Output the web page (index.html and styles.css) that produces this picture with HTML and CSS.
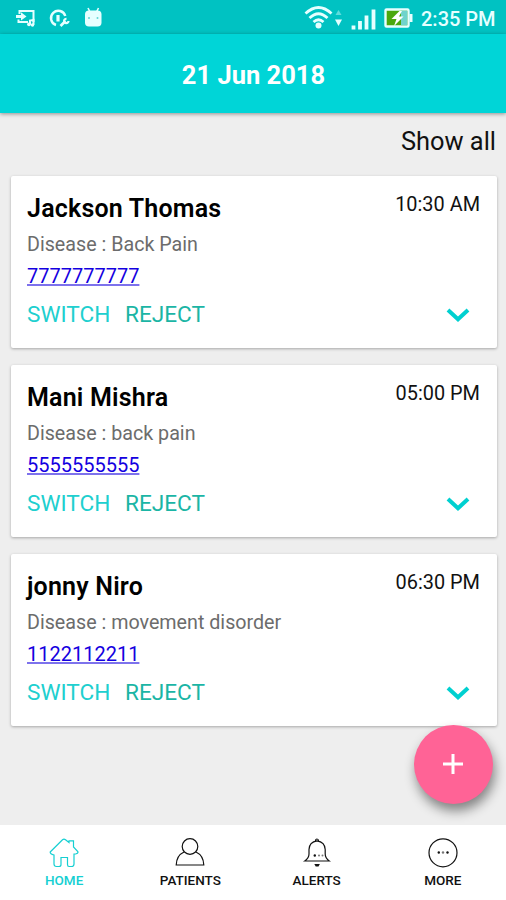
FILE: index.html
```html
<!DOCTYPE html>
<html lang="en">
<head>
<meta charset="utf-8">
<title>Appointments</title>
<link rel="stylesheet" href="styles.css">
</head>
<body>
<div class="app">
  <div class="status">
    <svg class="status-left" width="110" height="34" viewBox="0 0 110 34" fill="none" stroke="#e6ffff" stroke-width="2">
      <path d="M19.500 14V11H33.500V22M18.500 19.500V22H28"/>
      <path d="M21 12.300L26.500 16.500L21 20.500Z" fill="#e6ffff" stroke="none"/>
      <path d="M16 16.500H23" stroke-width="3"/>
      <circle cx="29" cy="24.300" r="1.900" fill="#e6ffff" stroke="none"/>
      <circle cx="32.500" cy="25" r="1.700" fill="#e6ffff" stroke="none"/>
      <path d="M30 24.500V20.500L33.500 20V25"/>
      <path d="M56 25A7.300 7.300 0 1 1 65.300 16" stroke-width="2.400"/>
      <path d="M58 15V21.500" stroke-width="3.200"/>
      <path d="M60.500 26L65.500 21" stroke-width="2.600"/>
      <path d="M66.500 18.800A2.200 2.200 0 1 0 68.500 21" stroke-width="2.200"/>
      <path d="M88 8L90 12M98.500 8L96.500 12" stroke-width="1.600"/>
      <rect x="85" y="10.500" width="16.500" height="16" rx="4" fill="#e6ffff" stroke="none"/>
      <circle cx="89" cy="18" r="1" fill="#5fd5d5" stroke="none"/>
      <circle cx="97.500" cy="18" r="1" fill="#5fd5d5" stroke="none"/>
    </svg>
    <svg class="status-right" width="112" height="34" viewBox="0 0 112 34" fill="none" stroke="#e6ffff">
      <path d="M1.500 13.500Q14.500 1.500 27.500 13.500M5.500 18Q14.500 9.500 23.500 18M9.500 22Q14.500 17.500 19.500 22" stroke-width="2.800"/>
      <circle cx="14.500" cy="25.500" r="3" fill="#e6ffff" stroke="none"/>
      <path d="M31.500 15L34.500 10L37.500 15Z" fill="#5fdcdc" stroke="none"/>
      <path d="M31 19.500H38L34.500 26Z" fill="#e6ffff" stroke="none"/>
      <path d="M49.500 25.500V29.500M56 21V29.500M62.500 15.500V29.500M69.500 9.500V29.500" stroke-width="3.800"/>
      <rect x="81.500" y="9.500" width="23" height="17" rx="1" fill="#4aa80e" stroke-width="2.400"/>
      <path d="M97 10.700H103.300V25.300H97Z" fill="#6fd3cc" stroke="none"/>
      <path d="M105.500 14H108.500V22H105.500Z" fill="#e6ffff" stroke="none"/>
      <path d="M95.500 11L87.500 19H92.500L90 26L99.500 16.500H95L98 11Z" fill="#fff" stroke="none"/>
    </svg>
    <span class="clock">2:35 PM</span>
  </div>
  <header class="bar">21 Jun 2018</header>
  <main class="content">
    <div class="show-all">Show all</div>
    <section class="card">
      <div class="top"><h2 class="name">Jackson Thomas</h2><time class="time">10:30 AM</time></div>
      <p class="disease">Disease : Back Pain</p>
      <a class="phone">7777777777</a>
      <div class="actions"><span class="switch">SWITCH</span><span class="reject">REJECT</span>
        <svg class="chevron" width="24" height="16" viewBox="0 0 24 16"><path d="M2 3L12 12.300L22 3"/></svg></div>
    </section>
    <section class="card">
      <div class="top"><h2 class="name">Mani Mishra</h2><time class="time">05:00 PM</time></div>
      <p class="disease">Disease : back pain</p>
      <a class="phone">5555555555</a>
      <div class="actions"><span class="switch">SWITCH</span><span class="reject">REJECT</span>
        <svg class="chevron" width="24" height="16" viewBox="0 0 24 16"><path d="M2 3L12 12.300L22 3"/></svg></div>
    </section>
    <section class="card">
      <div class="top"><h2 class="name">jonny Niro</h2><time class="time">06:30 PM</time></div>
      <p class="disease">Disease : movement disorder</p>
      <a class="phone">1122112211</a>
      <div class="actions"><span class="switch">SWITCH</span><span class="reject">REJECT</span>
        <svg class="chevron" width="24" height="16" viewBox="0 0 24 16"><path d="M2 3L12 12.300L22 3"/></svg></div>
    </section>
    <button class="fab" aria-label="Add"><svg width="22" height="22" viewBox="0 0 22 22"><path d="M11 1V21M1 11H21"/></svg></button>
  </main>
  <nav class="nav">
    <div class="tab active">
      <svg width="30" height="30" viewBox="0 0 30 30"><path d="M1.200 14L13.500 1.800Q15 .6 16.500 1.800L20 4.500V2.800H24.500V9L28.800 13.500Q29.500 15 27 15.800L25 16V26Q25 28.500 22.500 28.500H20Q18.500 28.500 18.500 26.500V19.500H12V26.500Q12 28.500 10 28.500H7.500Q5 28.500 5 26V17Q1 16 1.200 14Z"/></svg>
      <span>HOME</span>
    </div>
    <div class="tab">
      <svg width="30" height="30" viewBox="0 0 30 30"><circle cx="15" cy="8.500" r="7.800"/><path d="M9 14Q1.500 17.500 1.200 27H28.800Q28.500 17.500 21 14"/></svg>
      <span>PATIENTS</span>
    </div>
    <div class="tab">
      <svg width="30" height="30" viewBox="0 0 30 30"><path d="M2.800 23Q7 20 7 16V11.500Q7.200 4 15 2.800Q23 4 23.200 11.500V16Q23.200 20 27.200 23Z"/><path d="M13.500 3Q13.500 1 15 1Q16.500 1 16.500 3"/><circle class="solid" cx="12.800" cy="17.500" r="1.200"/><circle class="dim" cx="17" cy="17.500" r="1"/><circle class="dim" cx="20.500" cy="17.500" r="1"/><path class="solid" d="M12.300 26H17.900L16.500 28.500H13.700Z"/></svg>
      <span>ALERTS</span>
    </div>
    <div class="tab">
      <svg width="30" height="30" viewBox="0 0 30 30"><circle cx="15" cy="14.800" r="14"/><circle class="solid" cx="10.800" cy="14.500" r="1.200"/><circle class="dim" cx="15" cy="14.500" r="1.200"/><circle class="solid" cx="19.500" cy="14.500" r="1.200"/></svg>
      <span>MORE</span>
    </div>
  </nav>
</div>
</body>
</html>
```
FILE: styles.css
```css
* { box-sizing: border-box; }
body { margin: 0; font-family: Roboto, "Liberation Sans", sans-serif; color: #000; }
.app { width: 506px; height: 900px; display: flex; flex-direction: column; background: #eeeeee; overflow: hidden; }
.status { height: 34px; flex: none; display: flex; align-items: center; background: #00c2c2; padding-right: 11px; }
.status svg { flex: none; }
.status-right { margin-left: auto; }
.clock { width: 74px; margin-left: 5px; margin-top: 4px; flex: none; font-size: 20px; font-weight: 500; line-height: 30px; color: #e6ffff; white-space: nowrap; text-align: right; }
.bar { height: 79px; flex: none; display: flex; align-items: center; justify-content: center; padding: 3px 0 0 1px; background: #00d5d7; color: #fff; font-size: 25.500px; font-weight: 700; box-shadow: 0 1px 4px rgba(0,0,0,.4); }
.content { flex: 1; position: relative; padding: 13px 9px 0 11px; }
.show-all { height: 50px; line-height: 30px; text-align: right; font-size: 25.400px; color: #111; padding-right: 1px; }
.card { height: 172px; margin-bottom: 17px; padding: 16px 17px 0 16px; background: #fff; border-radius: 2px; box-shadow: 0 1px 3px rgba(0,0,0,.3); }
.top { display: flex; justify-content: space-between; align-items: flex-start; height: 36px; }
.name { margin: 0; font-size: 25px; font-weight: 600; letter-spacing: .2px; line-height: 34px; white-space: nowrap; }
.time { font-size: 19.900px; line-height: 26px; color: #111; white-space: nowrap; }
.disease { margin: 0; height: 32px; line-height: 34px; font-size: 19.700px; color: #6c6c6c; white-space: nowrap; }
.phone { display: block; height: 32px; line-height: 33px; font-size: 20px; color: #1400e0; text-decoration: underline; text-decoration-color: #7d72ec; }
.actions { display: flex; align-items: center; height: 45px; font-size: 22.600px; padding-right: 10.500px; }
.switch { color: #20cfcf; width: 98px; }
.reject { color: #1bb5a5; }
.chevron { margin-left: auto; fill: none; stroke: #00d0d0; stroke-width: 4; }
.fab { position: absolute; left: 414px; top: 612px; width: 79px; height: 79px; border: 0; padding: 0 1px 1px 0; border-radius: 50%; background: #ff6396; display: flex; align-items: center; justify-content: center; box-shadow: 2px 7px 12px rgba(0,0,0,.45); }
.fab path { stroke: #fff; stroke-width: 3; fill: none; }
.nav { position: relative; height: 75px; flex: none; display: flex; background: #fff; padding-left: 1px; }
.tab { flex: 1; display: flex; flex-direction: column; align-items: center; padding-top: 13px; color: #111; }
.tab svg { fill: none; stroke: currentColor; stroke-width: 1.200; }
.tab .solid { fill: currentColor; stroke: none; }
.tab .dim { fill: #777; stroke: none; }
.tab span { margin-top: 4px; font-size: 13.500px; font-weight: 500; line-height: 16px; }
.active { color: #15cfd2; }
```
